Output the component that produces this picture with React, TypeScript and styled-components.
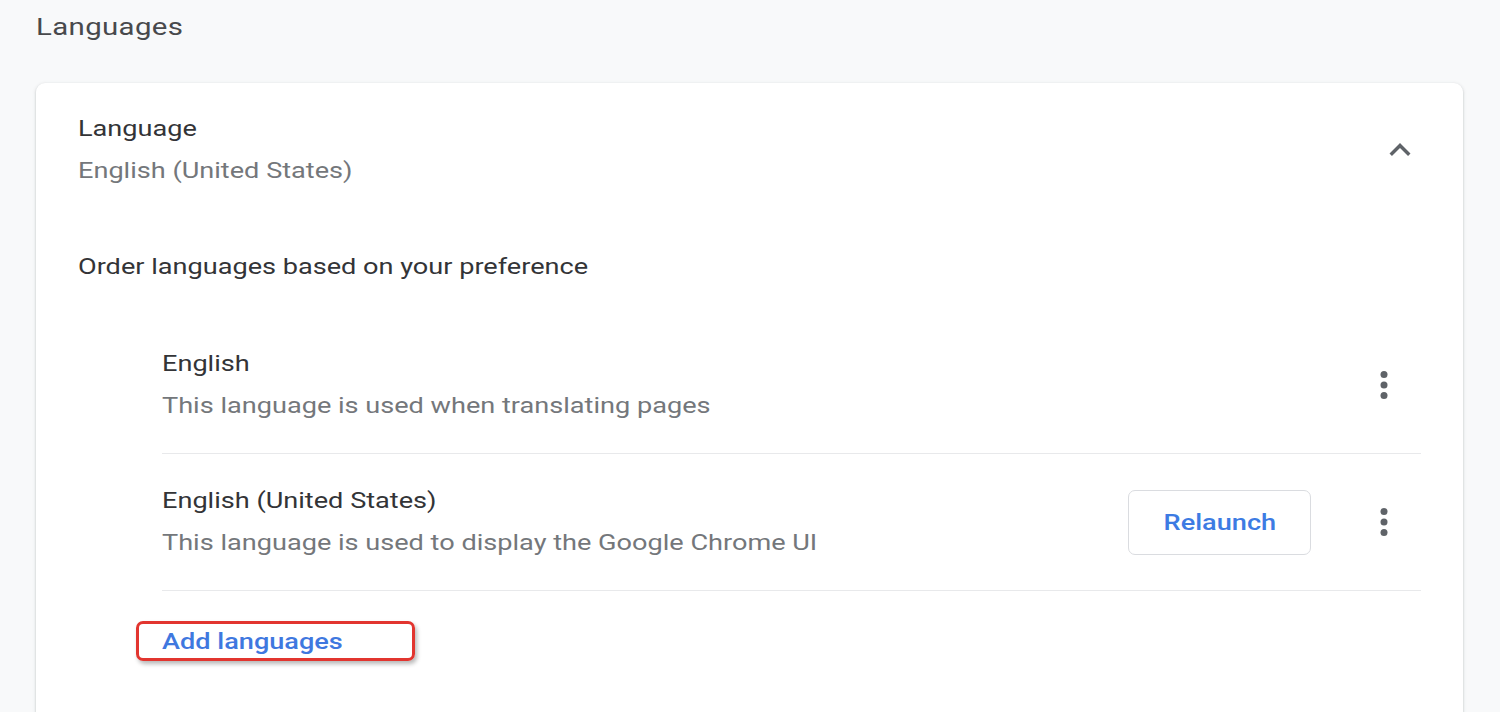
import * as React from "react";
import styled, { createGlobalStyle } from "styled-components";

const GlobalStyle = createGlobalStyle`
  html, body {
    margin: 0;
    padding: 0;
    background: #f8f9fa;
    font-family: Roboto, "Liberation Sans", Arial, sans-serif;
  }
`;

// the screenshot is stretched sideways, text is widened to match
const Wide = styled.span<{ $center?: boolean }>`
  display: inline-block;
  white-space: nowrap;
  transform: scaleX(1.2);
  transform-origin: ${({ $center }) => ($center ? "center" : "left")} center;
`;

const Page = styled.div`
  width: 1500px;
  height: 712px;
  overflow: hidden;
  box-sizing: border-box;
  padding: 0 37px 0 36px;
  background: #f8f9fa;
`;

const SectionTitle = styled.h2`
  margin: 0;
  height: 83px;
  padding-top: 8px;
  box-sizing: border-box;
  font-size: 24.5px;
  line-height: 38px;
  font-weight: 400;
  letter-spacing: 0.3px;
  color: #48494c;
`;

const Card = styled.div`
  background: #fff;
  border-radius: 9px;
  box-shadow: 0 1px 2px rgba(60, 64, 67, 0.25), 0 1px 4px rgba(60, 64, 67, 0.12);
  padding: 25px 42px 60px 42px;
`;

const HeaderRow = styled.div`
  display: flex;
  align-items: center;
`;

const Grow = styled.div`
  flex: 1;
  min-width: 0;
`;

const Primary = styled.div`
  font-size: 22.6px;
  line-height: 42px;
  color: #333437;
`;

const Secondary = styled.div`
  font-size: 22.6px;
  line-height: 42px;
  color: #74777b;
`;

const IconSlot = styled.div<{ $w: number }>`
  width: ${({ $w }) => $w}px;
  display: flex;
  justify-content: center;
  align-items: center;
  color: #5f6368;
`;

const Intro = styled(Primary)`
  margin-top: 54px;
`;

const List = styled.div`
  margin-top: 29px;
  padding-left: 84px;
`;

const Item = styled.div`
  display: flex;
  align-items: center;
  padding: 26px 0;
  border-bottom: 1px solid #e8e9eb;
`;

const RelaunchButton = styled.button`
  width: 183px;
  height: 65px;
  margin-right: 36px;
  background: #fff;
  border: 1.5px solid #dadce0;
  border-radius: 7px;
  font-family: inherit;
  font-size: 22.6px;
  font-weight: 500;
  color: #3d7be3;
  cursor: pointer;
`;

const AddRow = styled.div`
  padding-top: 30px;
`;

const AddLink = styled.a`
  position: relative;
  display: inline-block;
  font-size: 22.6px;
  line-height: 42px;
  font-weight: 500;
  color: #3f78df;
  text-decoration: none;

  &::after {
    content: "";
    position: absolute;
    left: -26px;
    top: 0px;
    width: 279px;
    height: 40px;
    box-sizing: border-box;
    border: 3.5px solid #e2352f;
    border-radius: 7px;
    box-shadow: 2px 3px 4px rgba(0, 0, 0, 0.28);
  }
`;

const ChevronUp = () => (
  <svg width="42" height="42" viewBox="0 0 24 24" fill="currentColor">
    <path d="M7.41 15.41 12 10.83l4.59 4.58L18 14l-6-6-6 6z" />
  </svg>
);

const MoreVert = () => (
  <svg width="42" height="42" viewBox="0 0 24 24" fill="currentColor">
    <circle cx="12" cy="6" r="2" />
    <circle cx="12" cy="12" r="2" />
    <circle cx="12" cy="18" r="2" />
  </svg>
);

const languages = [
  { name: "English", note: "This language is used when translating pages", relaunch: false },
  { name: "English (United States)", note: "This language is used to display the Google Chrome UI", relaunch: true },
];

export default function App() {
  return (
    <>
      <GlobalStyle />
      <Page>
        <SectionTitle><Wide>Languages</Wide></SectionTitle>
        <Card>
          <HeaderRow>
            <Grow>
              <Primary><Wide>Language</Wide></Primary>
              <Secondary><Wide>English (United States)</Wide></Secondary>
            </Grow>
            <IconSlot $w={42}>
              <ChevronUp />
            </IconSlot>
          </HeaderRow>
          <Intro><Wide>Order languages based on your preference</Wide></Intro>
          <List>
            {languages.map((lang) => (
              <Item key={lang.name}>
                <Grow>
                  <Primary><Wide>{lang.name}</Wide></Primary>
                  <Secondary><Wide>{lang.note}</Wide></Secondary>
                </Grow>
                {lang.relaunch && (
                  <RelaunchButton>
                    <Wide $center>Relaunch</Wide>
                  </RelaunchButton>
                )}
                <IconSlot $w={74}>
                  <MoreVert />
                </IconSlot>
              </Item>
            ))}
            <AddRow>
              <AddLink href="#">
                <Wide>Add languages</Wide>
              </AddLink>
            </AddRow>
          </List>
        </Card>
      </Page>
    </>
  );
}
